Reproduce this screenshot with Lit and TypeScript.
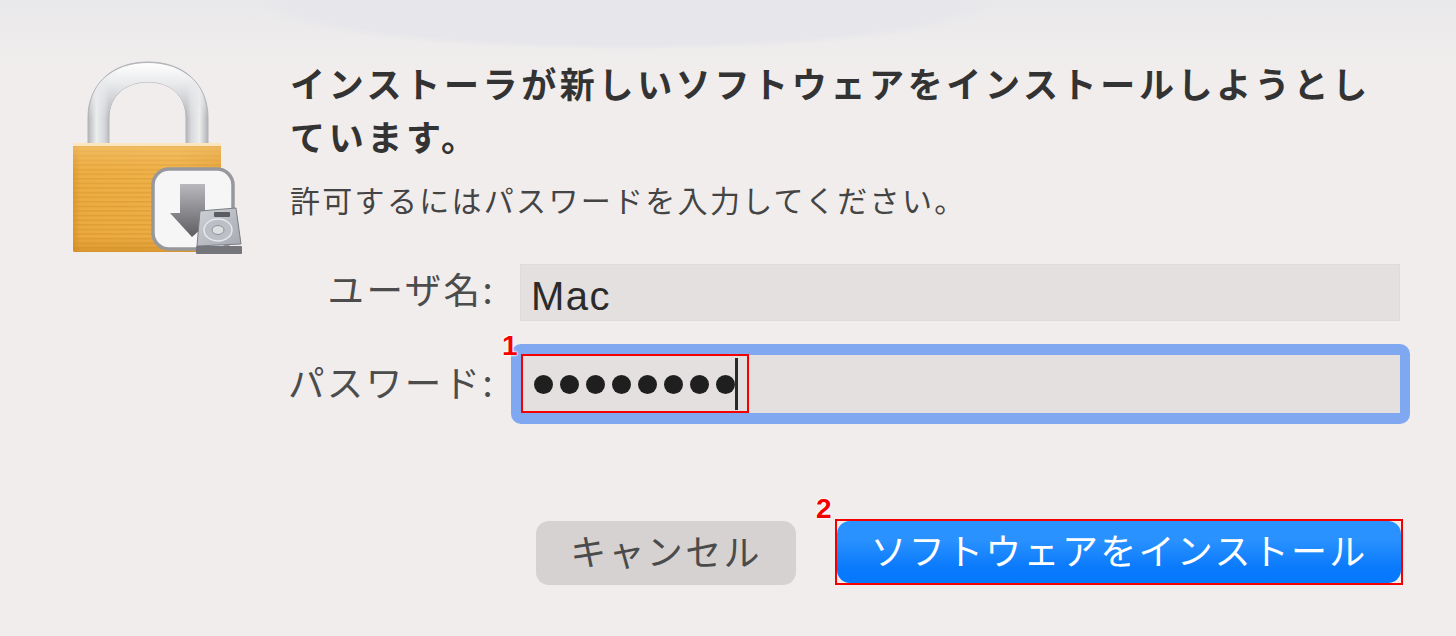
import { LitElement, html, css, svg } from "lit";
import { customElement } from "lit/decorators.js";

const lockIcon = svg`
<svg class="lock" viewBox="0 0 220 230" width="220" height="230" aria-hidden="true">
  <defs>
    <linearGradient id="sh" x1="38" x2="158" y1="0" y2="0" gradientUnits="userSpaceOnUse">
      <stop offset="0" stop-color="#b4b6bb"/><stop offset=".07" stop-color="#eceded"/>
      <stop offset=".14" stop-color="#d4d5d9"/><stop offset=".18" stop-color="#b4b6bb"/>
      <stop offset=".82" stop-color="#b4b6bb"/><stop offset=".86" stop-color="#d8d9dc"/>
      <stop offset=".93" stop-color="#eceded"/><stop offset="1" stop-color="#b0b2b8"/>
    </linearGradient>
    <linearGradient id="shTop" x1="0" x2="0" y1="22" y2="78" gradientUnits="userSpaceOnUse">
      <stop offset="0" stop-color="#ffffff"/><stop offset=".4" stop-color="#e8e9eb"/>
      <stop offset="1" stop-color="#e8e9eb" stop-opacity="0"/>
    </linearGradient>
    <linearGradient id="body" x1="0" x2="1" y1="0" y2="0">
      <stop offset="0" stop-color="#dc962c"/><stop offset=".05" stop-color="#edac40"/>
      <stop offset=".7" stop-color="#efb248"/><stop offset="1" stop-color="#e5a43a"/>
    </linearGradient>
    <linearGradient id="bodyV" x1="0" x2="0" y1="0" y2="1">
      <stop offset="0" stop-color="#f3c576" stop-opacity=".7"/><stop offset=".25" stop-color="#f3bd62" stop-opacity=".15"/>
      <stop offset=".85" stop-color="#d8922c" stop-opacity=".1"/><stop offset="1" stop-color="#c98420" stop-opacity=".55"/>
    </linearGradient>
    <pattern id="ridges" width="4" height="4.6" patternUnits="userSpaceOnUse">
      <rect width="4" height="1.6" fill="#d08a24" fill-opacity=".42"/>
    </pattern>
    <linearGradient id="arrow" x1="0" x2="0" y1="0" y2="1">
      <stop offset="0" stop-color="#b9b9bd"/><stop offset="1" stop-color="#5e5e62"/>
    </linearGradient>
    <linearGradient id="hdd" x1="0" x2="1" y1="0" y2="1">
      <stop offset="0" stop-color="#ced1d6"/><stop offset="1" stop-color="#a6a9b0"/>
    </linearGradient>
  </defs>
  <path d="M38 104 V78 C38 44 62 22 98 22 C134 22 158 44 158 78 V104 H136 V78 C136 55 120 42 98 42 C76 42 59 55 59 78 V104 Z" fill="url(#sh)" stroke="#b2b4b9" stroke-width="1"/>
  <path d="M39 78 C39 44 62 23 98 23 C134 23 157 44 157 78 H136 C136 55 120 42 98 42 C76 42 59 55 59 78 Z" fill="url(#shTop)"/>
  <rect x="23" y="103" width="148" height="109" rx="2" fill="url(#body)"/>
  <rect x="23" y="103" width="148" height="109" rx="2" fill="url(#ridges)"/>
  <rect x="23" y="103" width="148" height="109" rx="2" fill="url(#bodyV)"/>
  <rect x="23" y="103" width="148" height="3" fill="#fbe6bf"/>
  <rect x="103" y="129" width="80" height="80" rx="16" fill="#f6f6f7" stroke="#97989c" stroke-width="3.5"/>
  <path d="M130 144 H155 V173 H169 L142 197 L120 173 H130 Z" fill="url(#arrow)"/>
  <path d="M150 171 L186 168 L191 204 L147 206 Z" fill="url(#hdd)" stroke="#7c7e84" stroke-width="1"/>
  <ellipse cx="168" cy="190" rx="14" ry="11" fill="#bcbfc5" stroke="#e6e8eb" stroke-width="1.5"/>
  <ellipse cx="168" cy="190" rx="6" ry="4.5" fill="#dcdee1" stroke="#8f9197"/>
  <rect x="164" y="172" width="16" height="5" rx="1" fill="#5a5c62"/>
  <rect x="146" y="206" width="46" height="8" rx="1" fill="#74767c"/>
</svg>`;

@customElement("app-root")
export class AppRoot extends LitElement {
  static styles = css`
    :host {
      display: block;
      height: 636px;
      overflow: hidden;
      font-family: "Noto Sans CJK JP", "Noto Sans", sans-serif;
      color: #252525;
      background:
        radial-gradient(ellipse 376px 50px at 627px 0, #e7e6ea 0 90%, transparent 100%),
        linear-gradient(180deg, #e9e8ea 0, #eeecec 45px, #f0edec 70px);
    }
    .dialog { display: flex; height: 100%; box-sizing: border-box; padding: 40px 56px 0 50px; }
    .lock { flex: none; margin-right: 20px; display: block; }
    .main { flex: 1; min-width: 0; display: flex; flex-direction: column; }
    h1 {
      margin: 16px 0 0;
      width: 1095px;
      font-size: 35px;
      line-height: 53px;
      font-weight: 700;
      letter-spacing: 3.65px;
      color: #333;
    }
    .sub {
      margin: 14px 0 0;
      font-size: 30px;
      line-height: 46px;
      letter-spacing: 2.3px;
      color: #444;
    }
    .form {
      margin-top: 42px;
      display: grid;
      grid-template-columns: 205px 1fr;
      column-gap: 25px;
      row-gap: 34px;
      align-items: stretch;
    }
    .label {
      text-align: right;
      font-size: 36.5px;
      line-height: 50px;
      letter-spacing: 2.4px;
      color: #4c4c4c;
      white-space: nowrap;
    }
    .label.pw { padding-top: 2px; direction: ltr; margin-left: -20px; }
    .field {
      height: 57px;
      background: #e4e0df;
      box-shadow: inset 0 0 0 1px #dedbda;
      display: flex;
      align-items: center;
      padding-left: 11px;
      font-family: "Liberation Sans", Arial, sans-serif;
      font-size: 40px;
      letter-spacing: 1.5px;
      box-sizing: border-box;
    }
    .field.name { padding-top: 8px; color: #2b2b2b; }
    .field.focus {
      position: relative;
      height: 80px;
      margin: -11px -10px -11px -9px;
      border: solid #7fa8f0;
      border-width: 11px 10px;
      border-radius: 10px;
      background-clip: padding-box;
      box-shadow: none;
      padding-left: 13px;
      gap: 7px;
    }
    .dot { width: 19px; height: 19px; border-radius: 50%; background: #1f1f1f; flex: none; }
    .caret { width: 3px; height: 52px; background: #2a2a2a; margin-left: -7px; flex: none; }
    .mark { position: absolute; border: 2px solid #f50000; box-sizing: border-box; pointer-events: none; }
    .mark.one { left: 0; top: -1px; width: 228px; height: 59px; }
    .num {
      position: absolute;
      font: 700 28px/1 "Liberation Sans", Arial, sans-serif;
      color: #f50000;
      letter-spacing: 0;
      text-shadow: 0 0 2px #fff, 0 0 2px #fff, 0 0 3px #fff;
    }
    .num.one { left: -19px; top: -23px; }
    .actions { margin-top: 106px; display: flex; padding-left: 246px; align-items: flex-end; gap: 39px; }
    button {
      font-family: inherit;
      border: 0;
      font-size: 36px;
      line-height: 1;
      letter-spacing: 2.3px;
      height: 64px;
      padding: 0 0 6px;
      border-radius: 13px;
      white-space: nowrap;
      flex: none;
    }
    .cancel { width: 260px; background: #d5d2d1; color: #4b4b4b; }
    .wrap { position: relative; flex: none; width: 568px; height: 66px; box-sizing: border-box; border: 2px solid #f50000; }
    .install {
      display: block;
      width: 100%;
      height: 62px;
      color: #fff;
      background: linear-gradient(180deg, #2a92ff 0, #2a92ff 30%, #0a7afc 75%, #0578ff 100%);
    }
    .num.two { left: -21px; top: -26px; }
  `;

  render() {
    return html`
      <div class="dialog">
        ${lockIcon}
        <div class="main">
          <h1>インストーラが新しいソフトウェアをインストールしようとしています。</h1>
          <p class="sub">許可するにはパスワードを入力してください。</p>
          <div class="form">
            <div class="label">ユーザ名:</div>
            <div class="field name">Mac</div>
            <div class="label pw">パスワード:</div>
            <div class="field focus">
              ${[0, 1, 2, 3, 4, 5, 6, 7].map(() => html`<span class="dot"></span>`)}
              <span class="caret"></span>
              <span class="mark one"></span>
              <span class="num one">1</span>
            </div>
          </div>
          <div class="actions">
            <button class="cancel">キャンセル</button>
            <div class="wrap">
              <button class="install">ソフトウェアをインストール</button>
              <span class="num two">2</span>
            </div>
          </div>
        </div>
      </div>
    `;
  }
}
